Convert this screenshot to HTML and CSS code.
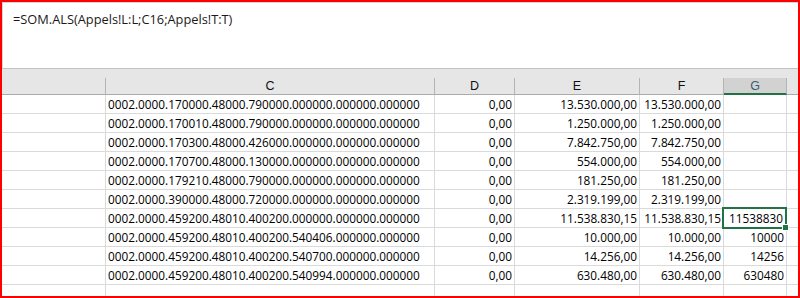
FILE: index.html
```html
<!DOCTYPE html>
<html>
<head>
<meta charset="utf-8">
<link rel="stylesheet" href="styles.css">
</head>
<body>
<div class="frame">
  <div class="formula">=SOM.ALS(Appels!L:L;C16;Appels!T:T)</div>
  <div class="hdr-gap"></div>
  <div class="sheet">
    <div class="hc"></div><div class="hc">C</div><div class="hc">D</div><div class="hc">E</div><div class="hc">F</div><div class="hc sel">G</div><div class="hc last"></div>

    <div class="c"></div><div class="c txt">0002.0000.170000.48000.790000.000000.000000.000000</div><div class="c num">0,00</div><div class="c num">13.530.000,00</div><div class="c num">13.530.000,00</div><div class="c num"></div><div class="c last"></div>
    <div class="c"></div><div class="c txt">0002.0000.170010.48000.790000.000000.000000.000000</div><div class="c num">0,00</div><div class="c num">1.250.000,00</div><div class="c num">1.250.000,00</div><div class="c num"></div><div class="c last"></div>
    <div class="c"></div><div class="c txt">0002.0000.170300.48000.426000.000000.000000.000000</div><div class="c num">0,00</div><div class="c num">7.842.750,00</div><div class="c num">7.842.750,00</div><div class="c num"></div><div class="c last"></div>
    <div class="c"></div><div class="c txt">0002.0000.170700.48000.130000.000000.000000.000000</div><div class="c num">0,00</div><div class="c num">554.000,00</div><div class="c num">554.000,00</div><div class="c num"></div><div class="c last"></div>
    <div class="c"></div><div class="c txt">0002.0000.179210.48000.790000.000000.000000.000000</div><div class="c num">0,00</div><div class="c num">181.250,00</div><div class="c num">181.250,00</div><div class="c num"></div><div class="c last"></div>
    <div class="c"></div><div class="c txt">0002.0000.390000.48000.720000.000000.000000.000000</div><div class="c num">0,00</div><div class="c num">2.319.199,00</div><div class="c num">2.319.199,00</div><div class="c num"></div><div class="c last"></div>
    <div class="c"></div><div class="c txt">0002.0000.459200.48010.400200.000000.000000.000000</div><div class="c num">0,00</div><div class="c num">11.538.830,15</div><div class="c num">11.538.830,15</div><div class="c num active">11538830<span class="handle"></span></div><div class="c last"></div>
    <div class="c"></div><div class="c txt">0002.0000.459200.48010.400200.540406.000000.000000</div><div class="c num">0,00</div><div class="c num">10.000,00</div><div class="c num">10.000,00</div><div class="c num">10000</div><div class="c last"></div>
    <div class="c"></div><div class="c txt">0002.0000.459200.48010.400200.540700.000000.000000</div><div class="c num">0,00</div><div class="c num">14.256,00</div><div class="c num">14.256,00</div><div class="c num">14256</div><div class="c last"></div>
    <div class="c"></div><div class="c txt">0002.0000.459200.48010.400200.540994.000000.000000</div><div class="c num">0,00</div><div class="c num">630.480,00</div><div class="c num">630.480,00</div><div class="c num">630480</div><div class="c last"></div>
    <div class="c"></div><div class="c"></div><div class="c"></div><div class="c"></div><div class="c"></div><div class="c"></div><div class="c last"></div>
  </div>
</div>
</body>
</html>
```
FILE: styles.css
```css
html, body {
  margin: 0;
  padding: 0;
  background: #ffffff;
}
.frame {
  width: 800px;
  height: 298px;
  box-sizing: border-box;
  border: 2px solid #ff0000;
  overflow: hidden;
  display: flex;
  flex-direction: column;
  background: #ffffff;
  font-family: "Open Sans", "Noto Sans", sans-serif;
  font-size: 11.8px;
  color: #000000;
}
.formula {
  flex: 0 0 auto;
  height: 67px;
  box-sizing: border-box;
  border-top: 1px solid #d4d4d4;
  border-left: 1px solid #d4d4d4;
  border-bottom: 1px solid #c3c3c3;
  padding: 6px 0 0 10px;
  font-size: 12.8px;
  line-height: 20px;
  color: #1a1a1a;
}
.hdr-gap {
  flex: 0 0 auto;
  height: 9px;
  background: #e6e6e6;
}
.sheet {
  flex: 1 1 auto;
  display: grid;
  grid-template-columns: 104px 329px 80px 125px 84px 63px 1fr;
  grid-template-rows: 17px repeat(10, 19px) 19px;
}
.hc {
  box-sizing: border-box;
  background: #e6e6e6;
  border-right: 1px solid #b4b4b4;
  border-bottom: 1px solid #ababab;
  font-family: "Liberation Sans", Arial, sans-serif;
  font-size: 12.5px;
  line-height: 16px;
  text-align: center;
  color: #111111;
}
.hc.sel {
  background: #d2d2d2;
  border-bottom: 2px solid #217346;
  color: #3b5d6e;
}
.hc.last {
  border-right: none;
}
.c {
  box-sizing: border-box;
  border-right: 1px solid #dadada;
  border-bottom: 1px solid #dadada;
  line-height: 18px;
  white-space: nowrap;
  overflow: visible;
}
.c.last {
  border-right: none;
}
.txt {
  padding-left: 2px;
}
.num {
  text-align: right;
  padding-right: 2px;
}
.active {
  position: relative;
  padding-right: 3px;
}
.active::before {
  content: "";
  position: absolute;
  left: -2px;
  top: -2px;
  right: -1px;
  bottom: -2px;
  border: 2px solid #217346;
}
.handle {
  position: absolute;
  right: -3px;
  bottom: -4px;
  width: 5px;
  height: 5px;
  background: #217346;
  border: 1px solid #ffffff;
}
```
